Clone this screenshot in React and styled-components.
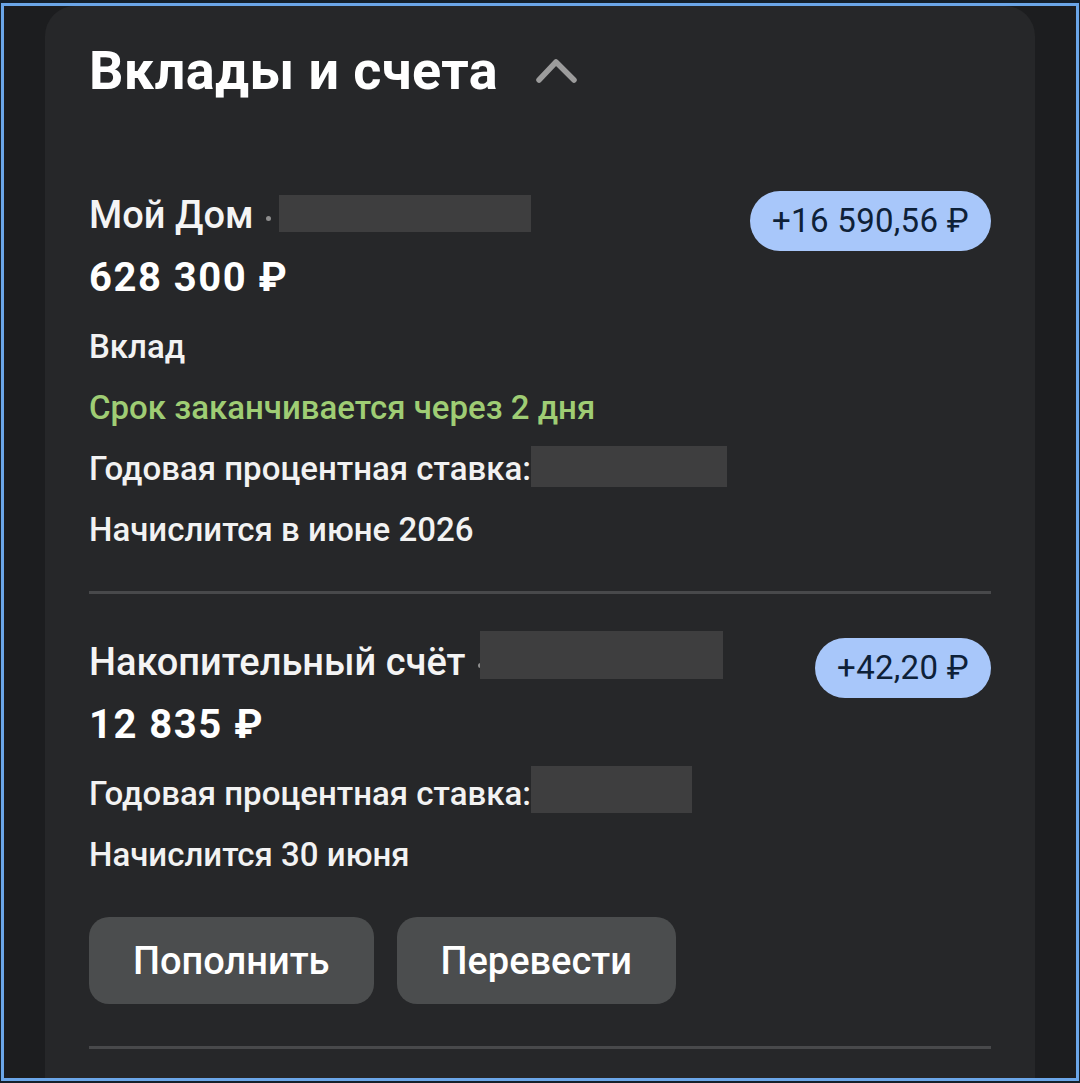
import React from "react";
import styled, { createGlobalStyle } from "styled-components";

const Global = createGlobalStyle`
  html, body { margin: 0; padding: 0; background: #15202b; }
  body { font-family: Roboto, "Noto Sans", "Liberation Sans", sans-serif; -webkit-font-smoothing: antialiased; }
  * { box-sizing: border-box; }
`;

const Frame = styled.div`
  margin: 3px 0 0 1px;
  width: 1078px;
  height: 1078px;
  border: 3px solid #6ba6e8;
  background: #1c1d1f;
  overflow: hidden;
  padding-left: 41px;
  display: flex;
`;

const Card = styled.section`
  width: 990px;
  min-height: 1100px;
  background: #262729;
  border-radius: 30px 30px 0 0;
  padding: 33px 44px 0 44px;
  display: flex;
  flex-direction: column;
`;

const Header = styled.div`
  display: flex;
  align-items: center;
  height: 64px;
  margin-bottom: 88px;
`;

const Title = styled.h1`
  margin: 0;
  font-size: 54px;
  line-height: 64px;
  font-weight: 700;
  color: #ffffff;
  letter-spacing: 0.4px;
`;

const Chevron = styled.svg`
  margin-left: 38px;
  margin-top: 2px;
  width: 42px;
  height: 28px;
`;

const Item = styled.div`
  display: flex;
  flex-direction: column;
  margin-top: ${(p) => p.$mt || 0}px;
`;

const TopRow = styled.div`
  display: flex;
  justify-content: space-between;
  align-items: flex-start;
`;

const NameCol = styled.div`
  display: flex;
  flex-direction: column;
`;

const NameLine = styled.div`
  display: flex;
  align-items: center;
  height: 48px;
  font-size: 38px;
  line-height: 48px;
  font-weight: 500;
  color: #f4f4f4;
`;

const Dot = styled.span`
  flex: none;
  width: 5px;
  height: 5px;
  border-radius: 50%;
  background: #8e8e8e;
  margin: 6px ${(p) => p.$after}px 0 12px;
`;

const Hidden = styled.span`
  display: inline-block;
  flex: none;
  width: ${(p) => p.$w}px;
  height: ${(p) => p.$h}px;
  background: #3e3e3f;
  transform: translateY(${(p) => -(p.$shift || 0)}px);
`;

const Amount = styled.div`
  margin-top: 11px;
  font-size: 40px;
  line-height: 56px;
  font-weight: 700;
  letter-spacing: 1.5px;
  color: #ffffff;
`;

const Badge = styled.div`
  height: 60px;
  padding: 0 22px;
  border-radius: 30px;
  background: #a8c7fa;
  color: #0e2138;
  font-size: 33px;
  line-height: 60px;
  font-weight: 400;
  letter-spacing: 0.3px;
  white-space: nowrap;
`;

const Info = styled.div`
  display: flex;
  flex-direction: column;
  margin-top: 10px;
`;

const Line = styled.div`
  display: flex;
  align-items: center;
  height: 61px;
  font-size: 33px;
  line-height: 61px;
  font-weight: 500;
  color: ${(p) => (p.$green ? "#9fcd74" : "#f2f2f2")};
`;

const Divider = styled.hr`
  margin: ${(p) => p.$mt}px 0 0 0;
  border: none;
  height: 3px;
  background: #48494b;
`;

const Buttons = styled.div`
  display: flex;
  gap: 23px;
  margin-top: 32px;
`;

const Button = styled.button`
  height: 87px;
  padding: 0 44px;
  border: none;
  border-radius: 20px;
  background: #4b4d4e;
  color: #ffffff;
  font-family: inherit;
  font-size: 38px;
  font-weight: 500;
`;

export default function App() {
  return (
    <>
      <Global />
      <Frame>
        <Card>
          <Header>
            <Title>Вклады и счета</Title>
            <Chevron viewBox="0 0 42 28">
              <polyline points="3,22 20,4 38,22" fill="none" stroke="#9c9c9c" strokeWidth="5.5" strokeLinecap="round" strokeLinejoin="round" />
            </Chevron>
          </Header>

          <Item>
            <TopRow>
              <NameCol>
                <NameLine>
                  Мой Дом<Dot $after={8} /><Hidden $w={252} $h={37} $shift={2} />
                </NameLine>
                <Amount>628 300 ₽</Amount>
              </NameCol>
              <Badge>+16 590,56 ₽</Badge>
            </TopRow>
            <Info>
              <Line>Вклад</Line>
              <Line $green>Срок заканчивается через 2 дня</Line>
              <Line>
                Годовая процентная ставка:<Hidden $w={196} $h={41} $shift={2} />
              </Line>
              <Line>Начислится в июне 2026</Line>
            </Info>
            <Divider $mt={31} />
          </Item>

          <Item $mt={44}>
            <TopRow>
              <NameCol>
                <NameLine>
                  Накопительный счёт<Dot $after={-3} /><Hidden $w={243} $h={48} $shift={7} />
                </NameLine>
                <Amount>12 835 ₽</Amount>
              </NameCol>
              <Badge>+42,20 ₽</Badge>
            </TopRow>
            <Info>
              <Line>
                Годовая процентная ставка:<Hidden $w={161} $h={47} $shift={4} />
              </Line>
              <Line>Начислится 30 июня</Line>
            </Info>
            <Buttons>
              <Button>Пополнить</Button>
              <Button>Перевести</Button>
            </Buttons>
            <Divider $mt={42} />
          </Item>
        </Card>
      </Frame>
    </>
  );
}
